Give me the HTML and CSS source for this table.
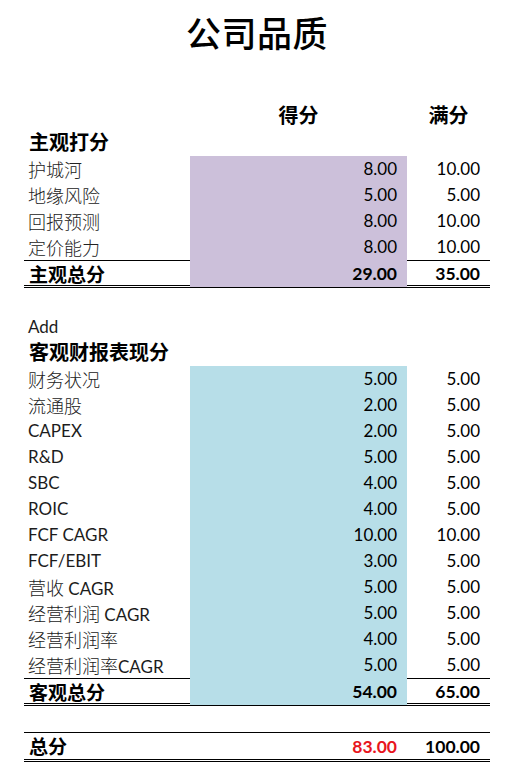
FILE: index.html
```html
<!DOCTYPE html>
<html lang="zh">
<head>
<meta charset="utf-8">
<title>公司品质</title>
<link rel="stylesheet" href="styles.css">
</head>
<body>
<div class="sheet">
  <h1 class="title">公司品质</h1>

  <div class="row head">
    <div class="lab"></div>
    <div class="c">得分</div>
    <div class="c">满分</div>
  </div>

  <div class="row section"><div class="lab">主观打分</div></div>

  <div class="row sub"><div class="lab"><span class="zh">护城河</span></div><div class="num s1">8.00</div><div class="num">10.00</div></div>
  <div class="row sub"><div class="lab"><span class="zh">地缘风险</span></div><div class="num s1">5.00</div><div class="num">5.00</div></div>
  <div class="row sub"><div class="lab"><span class="zh">回报预测</span></div><div class="num s1">8.00</div><div class="num">10.00</div></div>
  <div class="row sub"><div class="lab"><span class="zh">定价能力</span></div><div class="num s1">8.00</div><div class="num">10.00</div></div>
  <div class="row total"><div class="lab">主观总分</div><div class="num s1">29.00</div><div class="num">35.00</div></div>

  <div class="row blank"></div>

  <div class="row sub"><div class="lab">Add</div></div>
  <div class="row section"><div class="lab">客观财报表现分</div></div>

  <div class="row sub"><div class="lab"><span class="zh">财务状况</span></div><div class="num s2">5.00</div><div class="num">5.00</div></div>
  <div class="row sub"><div class="lab"><span class="zh">流通股</span></div><div class="num s2">2.00</div><div class="num">5.00</div></div>
  <div class="row sub"><div class="lab">CAPEX</div><div class="num s2">2.00</div><div class="num">5.00</div></div>
  <div class="row sub"><div class="lab">R&amp;D</div><div class="num s2">5.00</div><div class="num">5.00</div></div>
  <div class="row sub"><div class="lab">SBC</div><div class="num s2">4.00</div><div class="num">5.00</div></div>
  <div class="row sub"><div class="lab">ROIC</div><div class="num s2">4.00</div><div class="num">5.00</div></div>
  <div class="row sub"><div class="lab">FCF CAGR</div><div class="num s2">10.00</div><div class="num">10.00</div></div>
  <div class="row sub"><div class="lab">FCF/EBIT</div><div class="num s2">3.00</div><div class="num">5.00</div></div>
  <div class="row sub"><div class="lab"><span class="zh">营收</span> CAGR</div><div class="num s2">5.00</div><div class="num">5.00</div></div>
  <div class="row sub"><div class="lab"><span class="zh">经营利润</span> CAGR</div><div class="num s2">5.00</div><div class="num">5.00</div></div>
  <div class="row sub"><div class="lab"><span class="zh">经营利润率</span></div><div class="num s2">4.00</div><div class="num">5.00</div></div>
  <div class="row sub"><div class="lab"><span class="zh">经营利润率</span>CAGR</div><div class="num s2">5.00</div><div class="num">5.00</div></div>
  <div class="row total"><div class="lab">客观总分</div><div class="num s2">54.00</div><div class="num">65.00</div></div>

  <div class="row blank"></div>

  <div class="row total grand"><div class="lab">总分</div><div class="num red">83.00</div><div class="num">100.00</div></div>
</div>
</body>
</html>
```

FILE: styles.css
```css
html, body {
  margin: 0;
  padding: 0;
  background: #ffffff;
}

body {
  font-family: Lato, "Noto Sans CJK SC", sans-serif;
  color: #111111;
}

.sheet {
  width: 466px;
  padding: 14px 0 0 24px;
}

.title {
  margin: 0 0 54px 0;
  height: 36px;
  line-height: 36px;
  font-family: "Noto Sans CJK SC", sans-serif;
  font-size: 35px;
  font-weight: 500;
  text-align: center;
  letter-spacing: 0.5px;
  color: #000;
}

.row {
  display: grid;
  grid-template-columns: 166px 217px 83px;
  height: 26px;
}

.row > div {
  display: block;
  height: 100%;
  line-height: 26px;
  white-space: nowrap;
  overflow: visible;
}

.lab {
  padding-left: 4px;
  font-size: 17px;
  color: #1c1c1c;
}

.zh {
  font-family: "Noto Sans CJK SC", sans-serif;
  font-size: 18px;
  font-weight: 300;
  color: #222;
}

.head .c {
  text-align: center;
  font-family: "Noto Sans CJK SC", sans-serif;
  font-size: 20px;
  font-weight: 700;
  line-height: 21px;
  color: #000;
}

.section .lab {
  font-family: "Noto Sans CJK SC", sans-serif;
  font-size: 20px;
  font-weight: 700;
  line-height: 23px;
  color: #000;
  padding-left: 5px;
}

.num {
  text-align: right;
  padding-right: 10px;
  font-size: 17px;
  color: #000;
}

.s1 { background: #ccc0da; }
.s2 { background: #b7dee8; }

.total {
  height: 24px;
  border-top: 1px solid #000;
  border-bottom: 3px double #000;
}

.total > div {
  line-height: 26px;
}

.total .lab {
  font-family: "Noto Sans CJK SC", sans-serif;
  font-size: 19px;
  font-weight: 700;
  line-height: 25px;
  color: #000;
  padding-left: 5px;
}

.total .num {
  font-weight: 700;
  font-size: 17.5px;
}

.grand {
  height: 26px;
}

.grand > div {
  line-height: 27px;
}

.red {
  color: #e8141c;
}

.blank {
  height: 26px;
}
```
